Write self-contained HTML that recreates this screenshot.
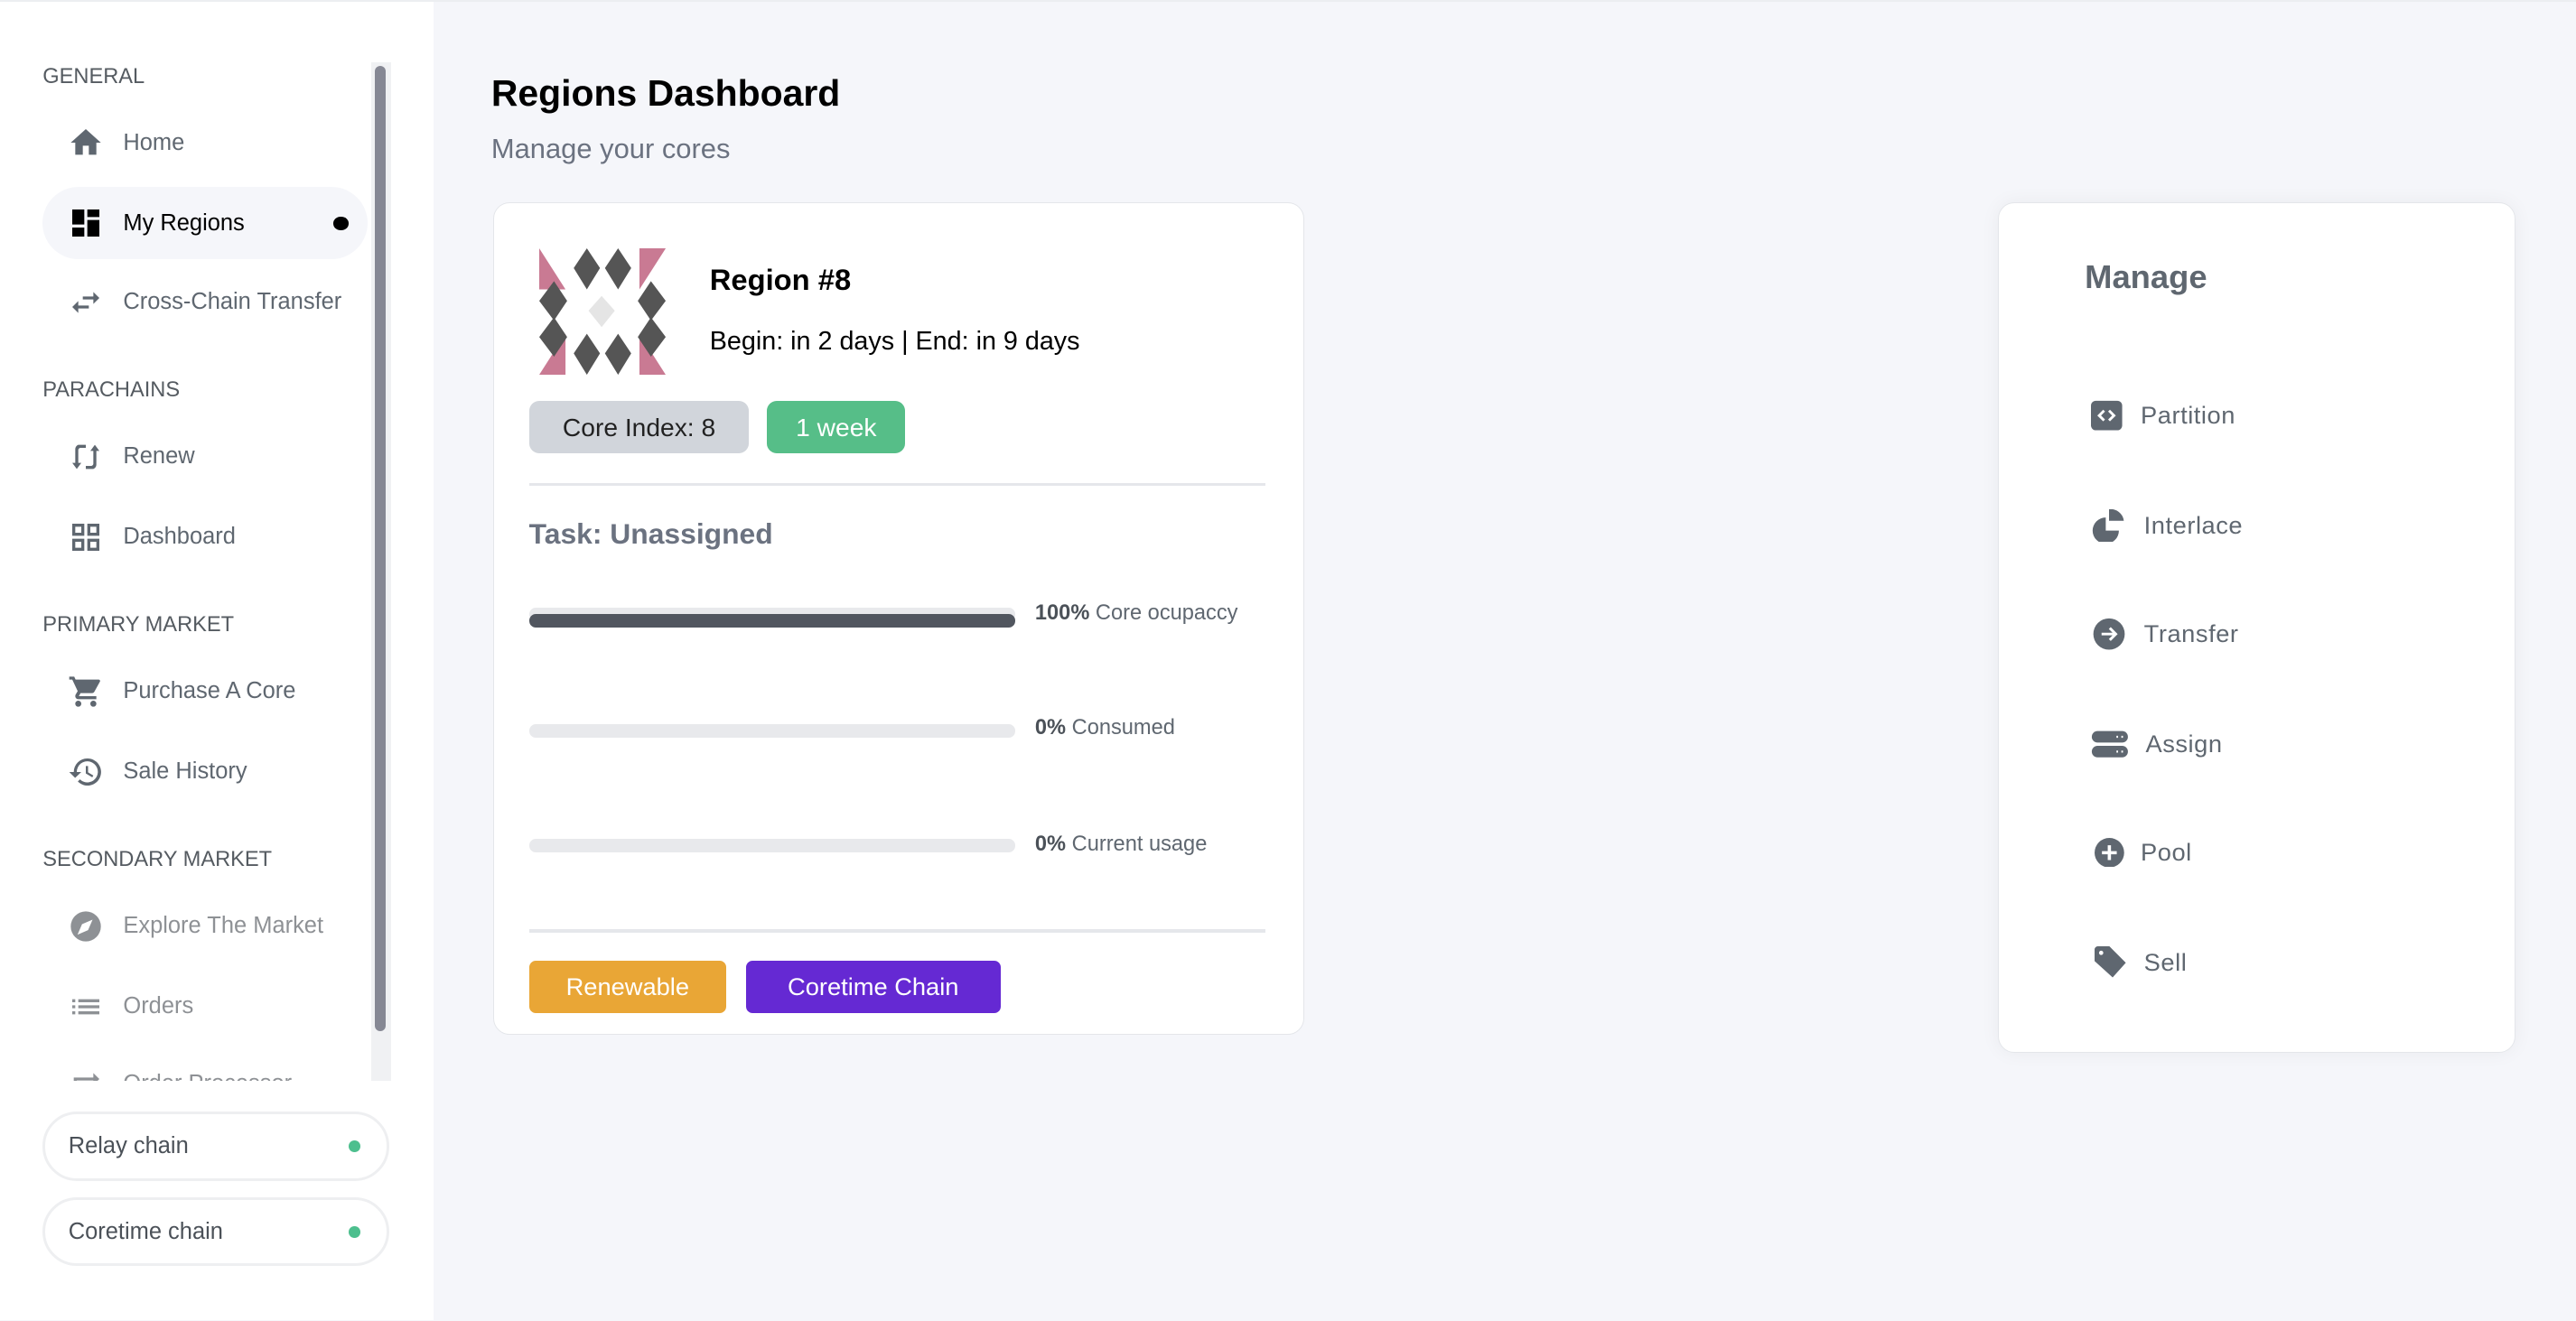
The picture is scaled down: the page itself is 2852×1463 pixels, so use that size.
<!DOCTYPE html>
<html><head><meta charset="utf-8"><style>
*{margin:0;padding:0;box-sizing:border-box}
html,body{width:2852px;height:1463px;overflow:hidden;background:#f5f6fa}
#w{zoom:1.8189;width:1568px;height:804px;position:relative;font-family:"Liberation Sans",sans-serif;background:#f5f6fa}
.a{position:absolute}
.sb{left:0;top:0;width:264px;height:804px;background:#fff}
.sec{left:26px;font-size:13px;color:#555b61;line-height:14px}
.it{left:41px;height:24px;display:flex;align-items:center;font-size:14px;color:#5f6770}
.it svg{width:22px;height:22px;fill:#5f6770;margin-right:12px}
.pill{left:26px;width:211px;height:42px;border:2px solid #eeeff1;border-radius:21px;background:#fff;font-size:14px;color:#4b5158;padding-left:14px;display:flex;align-items:center}
.pill i{position:absolute;right:16px;top:16px;width:7px;height:7px;border-radius:50%;background:#4dbf8e}
.card{background:#fff;border:1px solid #e4e6ea;border-radius:10px}
.bar{left:322px;width:296px;height:8px;border-radius:4px;background:#e8e9ec}
.bt{left:630px;font-size:13px;color:#5f6770}
.bt b{color:#4b5158}
.m{left:1273px;display:flex;align-items:center;font-size:15px;color:#5f6770;height:24px;letter-spacing:.3px}
.m svg{width:20px;height:20px;fill:#5f6770;margin-right:10px}
</style></head><body><div id="w">
<div class="a sb"></div>
<div class="a" style="left:0;top:0;width:1568px;height:1px;background:#eceef1"></div>
<div class="a" style="left:226px;top:38px;width:12px;height:620px;background:#f0f1f3"></div>
<div class="a" style="left:228px;top:40px;width:7px;height:588px;border-radius:4px;background:#868894"></div>

<div class="a sec" style="top:40px">GENERAL</div>
<div class="a" style="left:26px;top:114px;width:198px;height:44px;border-radius:22px;background:#f5f6fa"></div>
<div class="a it" style="top:75px"><svg viewBox="0 0 24 24"><path d="M10 20v-6h4v6h5v-8h3L12 3 2 12h3v8z"/></svg>Home</div>
<div class="a it" style="top:124px;color:#000"><svg viewBox="0 0 24 24" style="fill:#000"><path d="M3 3h8v10H3zM13 3h8v5h-8zM13 10h8v11h-8zM3 15h8v6H3z"/></svg>My Regions</div>
<div class="a" style="left:203px;top:132px;width:9px;height:8px;border-radius:50%;background:#000"></div>
<div class="a it" style="top:172px"><svg viewBox="0 0 24 24"><path d="M6.99 11L3 15l3.99 4v-3H14v-2H6.99v-3zM21 9l-3.99-4v3H10v2h7.01v3L21 9z"/></svg>Cross-Chain Transfer</div>

<div class="a sec" style="top:231px">PARACHAINS</div>
<div class="a it" style="top:266px"><svg viewBox="0 0 24 24"><path d="M7 4h5v2H8.5c-.8 0-1.5.7-1.5 1.5V16h2l-3 4-3-4h2V7a3 3 0 0 1 2-3zM17 20h-5v-2h3.5c.8 0 1.5-.7 1.5-1.5V8h-2l3-4 3 4h-2v9a3 3 0 0 1-2 3z"/></svg>Renew</div>
<div class="a it" style="top:315px"><svg viewBox="0 0 24 24"><path d="M3 3h8v8H3zm2 2v4h4V5zM13 3h8v8h-8zm2 2v4h4V5zM3 13h8v8H3zm2 2v4h4v-4zM13 13h8v8h-8zm2 2v4h4v-4z" fill-rule="evenodd"/></svg>Dashboard</div>

<div class="a sec" style="top:374px">PRIMARY MARKET</div>
<div class="a it" style="top:409px"><svg viewBox="0 0 24 24"><path d="M7 18c-1.1 0-2 .9-2 2s.9 2 2 2 2-.9 2-2-.9-2-2-2zM1 2v2h2l3.6 7.6-1.4 2.4c-.1.3-.2.6-.2 1 0 1.1.9 2 2 2h12v-2H7.4l1.1-2h7.5c.8 0 1.4-.4 1.700-1l3.6-6.5c.1-.2.2-.3.2-.5 0-.6-.4-1-1-1H5.2l-.9-2H1zm16 16c-1.1 0-2 .9-2 2s.9 2 2 2 2-.9 2-2-.9-2-2-2z"/></svg>Purchase A Core</div>
<div class="a it" style="top:458px"><svg viewBox="0 0 24 24"><path d="M13 3a9 9 0 0 0-9 9H1l3.9 3.9L9 12H6a7 7 0 1 1 2.1 4.9l-1.4 1.4A9 9 0 1 0 13 3zm-1 5v5l4.3 2.5.7-1.2-3.5-2.1V8z"/></svg>Sale History</div>

<div class="a sec" style="top:517px">SECONDARY MARKET</div>
<div class="a it" style="top:552px;color:#8e9195"><svg viewBox="0 0 24 24" style="fill:#8e9195"><path d="M12 2a10 10 0 1 0 0 20 10 10 0 0 0 0-20zm-5.5 15.5l3-7 7-3-3 7z"/><circle cx="12" cy="12" r="1.2" fill="#fff"/></svg>Explore The Market</div>
<div class="a it" style="top:601px;color:#8e9195"><svg viewBox="0 0 24 24" style="fill:#8e9195"><path d="M3 13h2v-2H3zm0 4h2v-2H3zm0-8h2V7H3zm4 4h14v-2H7zm0 4h14v-2H7zM7 7v2h14V7z"/></svg>Orders</div>
<div class="a" style="left:0;top:648px;width:226px;height:10px;overflow:hidden"><div class="a it" style="top:0;color:#8e9195"><svg viewBox="0 0 24 24" style="fill:#8e9195"><path d="M21 9l-4-4v3H4v8h2v-6h11v3z"/></svg>Order Processor</div></div>

<div class="a pill" style="top:677px">Relay chain<i></i></div>
<div class="a pill" style="top:729px">Coretime chain<i></i></div>

<div class="a" style="left:299px;top:44px;font-size:22.5px;font-weight:bold;color:#000">Regions Dashboard</div>
<div class="a" style="left:299px;top:81px;font-size:17px;color:#6b7280">Manage your cores</div>

<div class="a card" style="left:300px;top:123px;width:494px;height:507px"></div>
<svg class="a" style="left:328px;top:151px" width="77" height="77" viewBox="0 0 77 77">
<g fill="#c97a93"><path d="M0 0L16 25H0zM77 0L61 25V0zM0 77L16 52V77zM77 77L61 52V77z"/></g>
<g fill="#555"><path d="M29 0l8 12-8 13-8-13zM48 0l8 12-8 13-8-13zM29 52l8 12-8 13-8-13zM48 52l8 12-8 13-8-13zM9 20l8 12-8 12-9-12zM68 20l9 12-9 12-8-12zM9 42l8 12-8 12-9-12zM68 42l9 12-9 12-8-12z"/></g>
<path d="M38 29l8 9-8 10-8-10z" fill="#e5e5e5"/></svg>
<div class="a" style="left:432px;top:160px;font-size:18px;font-weight:bold;color:#000">Region #8</div>
<div class="a" style="left:432px;top:199px;font-size:15.8px;color:#000">Begin: in 2 days | End: in 9 days</div>
<div class="a" style="left:322px;top:244px;width:134px;height:32px;border-radius:6px;background:#d1d5db;font-size:15.5px;color:#222;text-align:center;line-height:32px">Core Index: 8</div>
<div class="a" style="left:467px;top:244px;width:84px;height:32px;border-radius:6px;background:#56be88;font-size:15.5px;color:#fff;text-align:center;line-height:32px">1 week</div>
<div class="a" style="left:322px;top:294px;width:448px;height:2px;background:#e5e7eb"></div>
<div class="a" style="left:322px;top:315px;font-size:17.5px;font-weight:bold;color:#6b7280">Task: Unassigned</div>
<div class="a bar" style="top:370px"></div>
<div class="a" style="left:322px;top:374px;width:296px;height:8px;border-radius:4px;background:#51565f"></div>
<div class="a bt" style="top:366px"><b>100%</b> Core ocupaccy</div>
<div class="a bar" style="top:441px"></div>
<div class="a bt" style="top:436px"><b>0%</b> Consumed</div>
<div class="a bar" style="top:511px"></div>
<div class="a bt" style="top:507px"><b>0%</b> Current usage</div>
<div class="a" style="left:322px;top:566px;width:448px;height:2px;background:#e5e7eb"></div>
<div class="a" style="left:322px;top:585px;width:120px;height:32px;border-radius:4px;background:#e9a636;color:#fff;font-size:15px;text-align:center;line-height:32px">Renewable</div>
<div class="a" style="left:454px;top:585px;width:155px;height:32px;border-radius:4px;background:#6529d3;color:#fff;font-size:15px;text-align:center;line-height:32px">Coretime Chain</div>

<div class="a card" style="left:1216px;top:123px;width:315px;height:518px;box-shadow:0 0 12px rgba(0,0,0,.05)"></div>
<div class="a" style="left:1269px;top:157px;font-size:20px;font-weight:bold;color:#5f6770">Manage</div>
<div class="a m" style="top:241px"><svg viewBox="0 0 20 20"><rect x="0" y="1" width="19" height="18" rx="3"/><path d="M8 7l-3 3 3 3M11 7l3 3-3 3" stroke="#fff" stroke-width="1.6" fill="none"/></svg>Partition</div>
<div class="a m" style="top:308px"><svg viewBox="0 0 22 20" style="width:22px"><path d="M9 5v8h8a8 8 0 1 1-8-8z"/><path d="M11 0a8 8 0 0 1 9 7h-9z"/></svg>Interlace</div>
<div class="a m" style="top:374px"><svg viewBox="0 0 22 22" style="width:22px"><circle cx="11" cy="11" r="10.5"/><path d="M6 11h9M11.5 7l4 4-4 4" stroke="#fff" stroke-width="1.8" fill="none"/></svg>Transfer</div>
<div class="a m" style="top:441px"><svg viewBox="0 0 22 20" style="width:23px"><rect x="0" y="2" width="22" height="7" rx="3.5"/><rect x="0" y="11" width="22" height="7" rx="3.5"/><path d="M15 5.5h1M18 5.5h1M15 14.5h1M18 14.5h1" stroke="#fff" stroke-width="1.2"/></svg>Assign</div>
<div class="a m" style="top:507px;left:1275px"><svg viewBox="0 0 20 20" style="width:18px;height:18px"><circle cx="10" cy="10" r="10"/><path d="M5 10h10M10 5v10" stroke="#fff" stroke-width="2.2"/></svg>Pool</div>
<div class="a m" style="top:574px;left:1275px"><svg viewBox="0 0 20 20"><path d="M0 2a2 2 0 0 1 2-2h7l10 10-8 9L0 9z"/><circle cx="4" cy="4" r="1.3" fill="#fff"/></svg>Sell</div>
</div></body></html>
